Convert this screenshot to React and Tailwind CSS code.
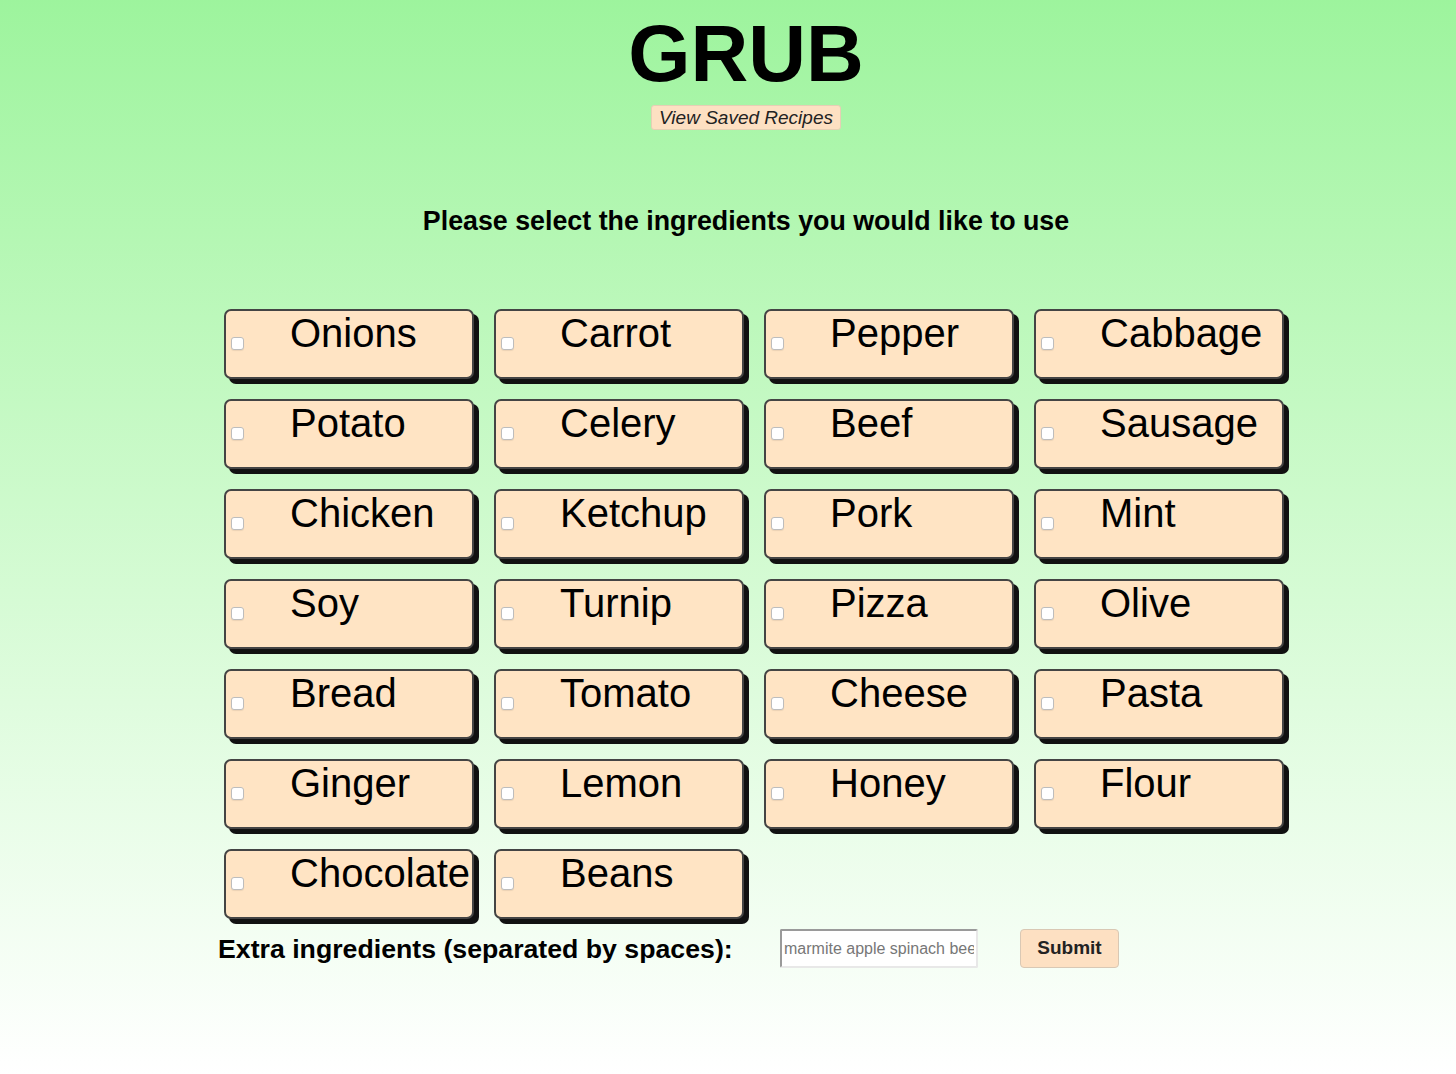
import React from "react";

const items = [
  "Onions", "Carrot", "Pepper", "Cabbage",
  "Potato", "Celery", "Beef", "Sausage",
  "Chicken", "Ketchup", "Pork", "Mint",
  "Soy", "Turnip", "Pizza", "Olive",
  "Bread", "Tomato", "Cheese", "Pasta",
  "Ginger", "Lemon", "Honey", "Flour",
  "Chocolate", "Beans",
];

const font = { fontFamily: '"Liberation Sans", Arial, Helvetica, sans-serif' };

function Card({ name }) {
  return (
    <label className="flex items-start w-[250px] h-[70px] bg-[#ffe4c4] border-2 border-[#444] rounded-[7px] shadow-[5px_5px_0_#111] cursor-pointer">
      <input
        type="checkbox"
        className="appearance-none shrink-0 w-[13px] h-[13px] mt-[26px] ml-[5px] bg-white border border-[#bdbdbd] rounded-[3px] shadow-[0_1px_1px_rgba(0,0,0,0.08)]"
      />
      <span className="ml-[46px] -mt-[1px] text-[40px] leading-[46px] text-black whitespace-nowrap">
        {name}
      </span>
    </label>
  );
}

export default function App() {
  return (
    <div
      className="min-h-screen w-full bg-gradient-to-b from-[#9df49d] to-white text-black"
      style={font}
    >
      <div className="flex flex-col items-center pl-[36px] pt-[14px]">
        <h1 className="text-[80px] leading-[80px] font-bold">GRUB</h1>
        <button className="mt-[11px] h-[25px] px-[7px] bg-[#fde0c2] border border-[#e6cfb4] rounded-[3px] text-[19px] leading-[23px] italic text-[#222]">
          View Saved Recipes
        </button>
        <h2 className="mt-[76px] text-[26.8px] leading-[30px] font-bold">
          Please select the ingredients you would like to use
        </h2>
      </div>
      <div className="pl-[224px] mt-[73px] grid grid-cols-[repeat(4,250px)] gap-x-[20px] gap-y-[20px]">
        {items.map((n) => (
          <Card key={n} name={n} />
        ))}
      </div>
      <div className="flex items-center pl-[218px] mt-[10px]">
        <span className="w-[562px] shrink-0 text-[26.7px] leading-[32px] font-bold whitespace-nowrap">
          Extra ingredients (separated by spaces):
        </span>
        <input
          type="text"
          placeholder="marmite apple spinach beef"
          className="w-[198px] h-[39px] px-[2px] bg-white border-2 border-t-[#9a9a9a] border-l-[#9a9a9a] border-b-[#e8e8e8] border-r-[#e8e8e8] rounded-[2px] text-[16px] text-[#333] placeholder:text-[#777] outline-none"
          style={font}
        />
        <button className="ml-[42px] w-[99px] h-[39px] bg-[#fde0c2] border border-[#d9c8b4] rounded-[4px] text-[19px] font-bold text-[#222]">
          Submit
        </button>
      </div>
    </div>
  );
}
